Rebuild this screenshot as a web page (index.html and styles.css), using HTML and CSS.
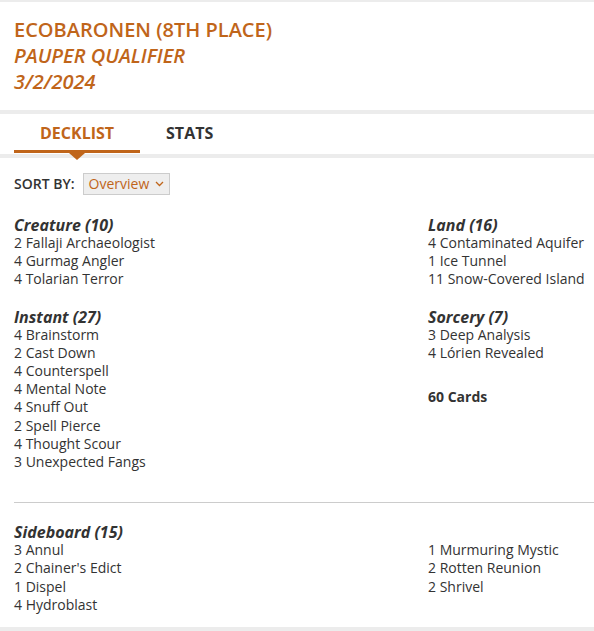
FILE: index.html
```html
<!DOCTYPE html>
<html>
<head>
<meta charset="utf-8">
<link rel="stylesheet" href="styles.css">
</head>
<body>
<div class="page">
  <header class="head">
    <div class="title">ECOBARONEN (8TH PLACE)</div>
    <div class="sub">PAUPER QUALIFIER</div>
    <div class="sub">3/2/2024</div>
  </header>
  <nav class="tabs">
    <div class="tab active">DECKLIST</div>
    <div class="tab">STATS</div>
  </nav>
  <main class="body">
    <div class="sort">
      <span class="sort-label">SORT BY:</span>
      <div class="select">Overview
        <svg class="chev" width="9" height="6" viewBox="0 0 9 6"><path d="M1 1 L4.5 4.5 L8 1" fill="none" stroke="#c0651a" stroke-width="1.3"/></svg>
      </div>
    </div>
    <div class="deck">
      <div class="col">
        <section class="group">
          <h3>Creature (10)</h3>
          <div>2 Fallaji Archaeologist</div>
          <div>4 Gurmag Angler</div>
          <div>4 Tolarian Terror</div>
        </section>
        <section class="group">
          <h3>Instant (27)</h3>
          <div>4 Brainstorm</div>
          <div>2 Cast Down</div>
          <div>4 Counterspell</div>
          <div>4 Mental Note</div>
          <div>4 Snuff Out</div>
          <div>2 Spell Pierce</div>
          <div>4 Thought Scour</div>
          <div>3 Unexpected Fangs</div>
        </section>
      </div>
      <div class="col">
        <section class="group">
          <h3>Land (16)</h3>
          <div>4 Contaminated Aquifer</div>
          <div>1 Ice Tunnel</div>
          <div>11 Snow-Covered Island</div>
        </section>
        <section class="group">
          <h3>Sorcery (7)</h3>
          <div>3 Deep Analysis</div>
          <div>4 Lórien Revealed</div>
        </section>
        <div class="total">60 Cards</div>
      </div>
    </div>
    <hr class="divider">
    <div class="side">
      <div class="col">
        <h3>Sideboard (15)</h3>
        <div>3 Annul</div>
        <div>2 Chainer's Edict</div>
        <div>1 Dispel</div>
        <div>4 Hydroblast</div>
      </div>
      <div class="col side-right">
        <div>1 Murmuring Mystic</div>
        <div>2 Rotten Reunion</div>
        <div>2 Shrivel</div>
      </div>
    </div>
  </main>
</div>
</body>
</html>
```
FILE: styles.css
```css
html, body {
  margin: 0;
  padding: 0;
  background: #fff;
}
body {
  font-family: "Open Sans", "Liberation Sans", sans-serif;
  color: #333;
  overflow: hidden;
}
.page {
  width: 594px;
  height: 631px;
  border-top: 2px solid #ececec;
  border-bottom: 4px solid #ececec;
  box-sizing: border-box;
  overflow: hidden;
}
.head {
  padding: 15px 14px 15px;
  color: #c0651a;
  font-size: 20px;
  line-height: 26px;
  font-weight: 600;
  border-bottom: 4px solid #ececec;
}
.sub {
  font-style: italic;
}
.tabs {
  display: flex;
  padding-left: 14px;
  border-bottom: 4px solid #ececec;
  height: 40px;
}
.tab {
  position: relative;
  height: 40px;
  padding: 8px 26px 0 26px;
  font-size: 16px;
  font-weight: 700;
  line-height: 22px;
  color: #333;
  box-sizing: border-box;
}
.tab.active {
  color: #c0651a;
  border-bottom: 3px solid #c0651a;
  height: 39px;
}
.tab.active::after {
  content: "";
  position: absolute;
  left: 50%;
  bottom: -10px;
  margin-left: -8px;
  border-left: 8px solid transparent;
  border-right: 8px solid transparent;
  border-top: 7px solid #c0651a;
}
.body {
  padding: 15px 0 0 14px;
  font-size: 14px;
  line-height: 18.2px;
  white-space: nowrap;
}
.sort {
  display: flex;
  align-items: center;
  gap: 8px;
}
.sort-label {
  font-weight: 600;
  font-size: 14px;
}
.select {
  display: flex;
  align-items: center;
  justify-content: space-between;
  width: 87px;
  height: 22px;
  box-sizing: border-box;
  padding: 0 5px 0 5px;
  background: #eee;
  border: 1px solid #ccc;
  color: #c0651a;
  font-size: 14px;
}
.deck {
  display: grid;
  grid-template-columns: 414px 1fr;
  margin-top: 21px;
}
.group {
  margin-bottom: 19px;
}
h3 {
  margin: 0;
  font-size: 16px;
  font-weight: 700;
  font-style: italic;
  line-height: 18px;
}
.total {
  margin-top: 26px;
  font-weight: 700;
  font-size: 14px;
}
.divider {
  border: 0;
  border-top: 1px solid #ccc;
  margin: 12px 0 20px 0;
}
.side {
  display: grid;
  grid-template-columns: 414px 1fr;
}
.side-right {
  padding-top: 18px;
}
```
